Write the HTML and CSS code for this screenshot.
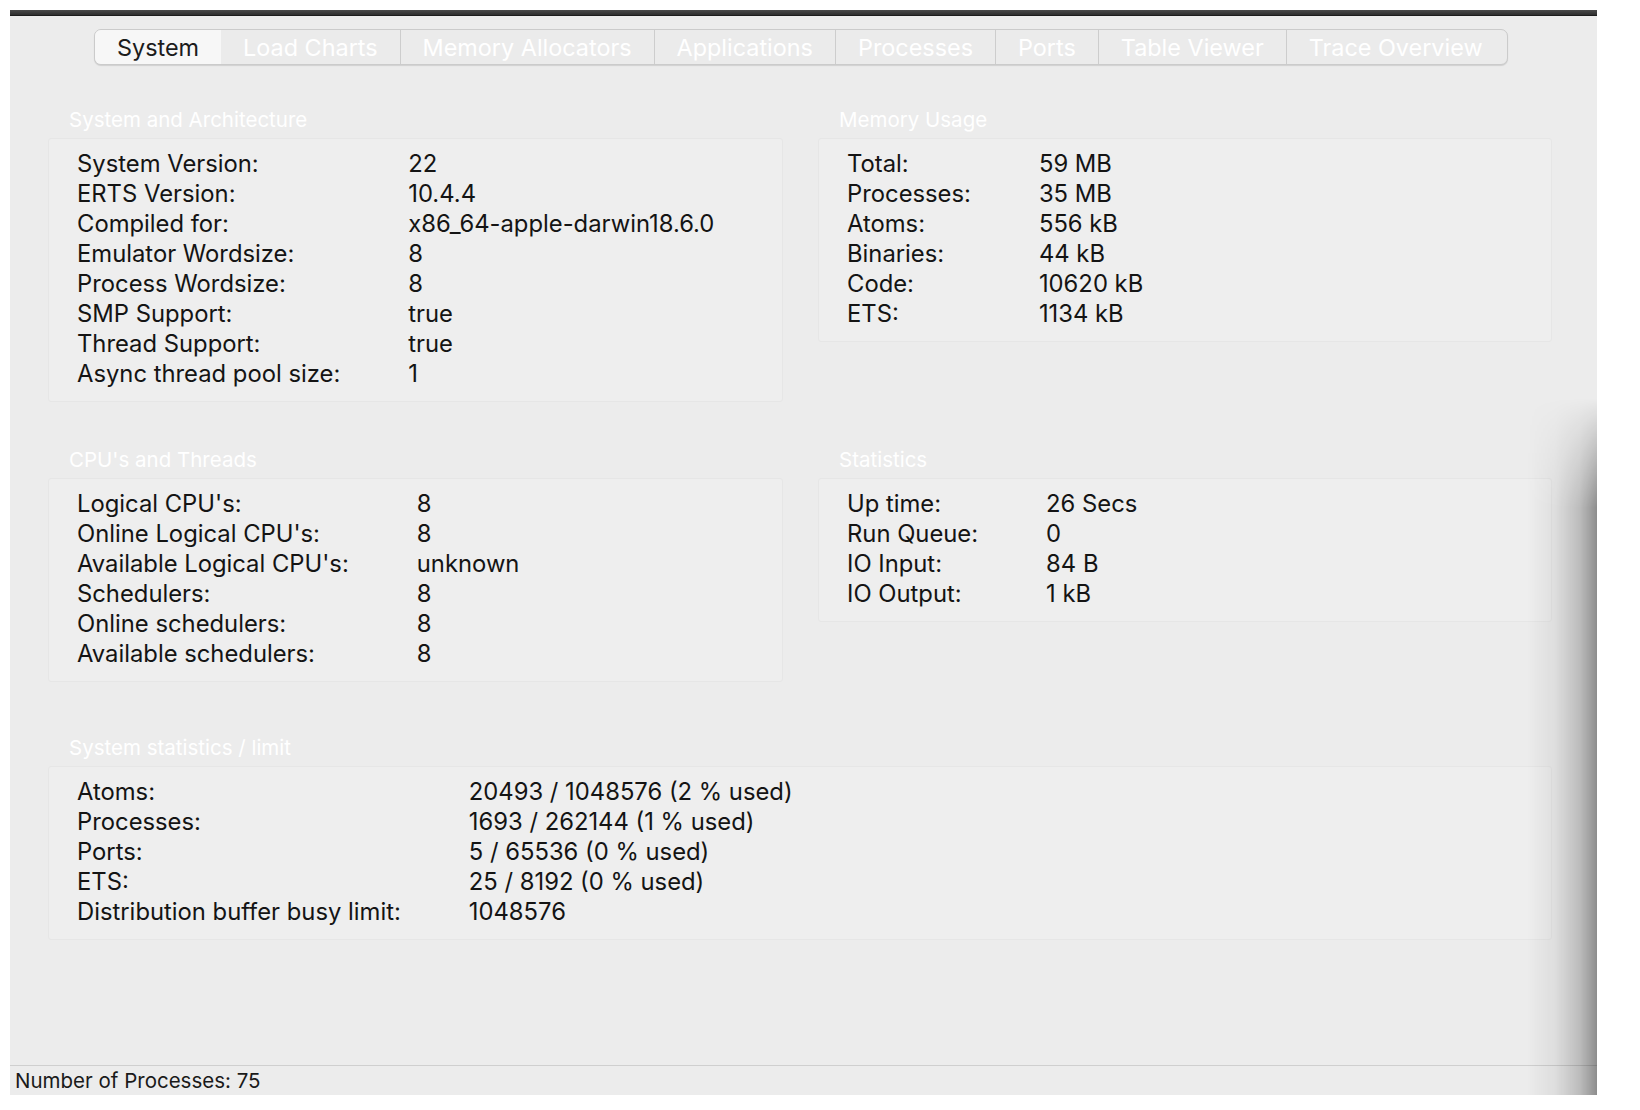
FILE: index.html
```html
<!DOCTYPE html>
<html>
<head>
<meta charset="utf-8">
<link rel="stylesheet" href="styles.css">
</head>
<body>
<div class="window">
  <div class="titlebar"></div>
  <div class="tabbar">
    <div class="tab selected">System</div>
    <div class="tab">Load Charts</div>
    <div class="tab divided">Memory Allocators</div>
    <div class="tab divided">Applications</div>
    <div class="tab divided">Processes</div>
    <div class="tab divided">Ports</div>
    <div class="tab divided">Table Viewer</div>
    <div class="tab divided">Trace Overview</div>
  </div>

  <div class="content">
    <div class="row row-1">
      <section class="section">
        <h2 class="heading">System and Architecture</h2>
        <div class="panel">
          <div class="kv">
            <span>System Version:</span><span>22</span>
            <span>ERTS Version:</span><span>10.4.4</span>
            <span>Compiled for:</span><span>x86_64-apple-darwin18.6.0</span>
            <span>Emulator Wordsize:</span><span>8</span>
            <span>Process Wordsize:</span><span>8</span>
            <span>SMP Support:</span><span>true</span>
            <span>Thread Support:</span><span>true</span>
            <span>Async thread pool size:</span><span>1</span>
          </div>
        </div>
      </section>
      <section class="section">
        <h2 class="heading">Memory Usage</h2>
        <div class="panel">
          <div class="kv">
            <span>Total:</span><span>59 MB</span>
            <span>Processes:</span><span>35 MB</span>
            <span>Atoms:</span><span>556 kB</span>
            <span>Binaries:</span><span>44 kB</span>
            <span>Code:</span><span>10620 kB</span>
            <span>ETS:</span><span>1134 kB</span>
          </div>
        </div>
      </section>
    </div>

    <div class="row row-2">
      <section class="section">
        <h2 class="heading">CPU's and Threads</h2>
        <div class="panel">
          <div class="kv">
            <span>Logical CPU's:</span><span>8</span>
            <span>Online Logical CPU's:</span><span>8</span>
            <span>Available Logical CPU's:</span><span>unknown</span>
            <span>Schedulers:</span><span>8</span>
            <span>Online schedulers:</span><span>8</span>
            <span>Available schedulers:</span><span>8</span>
          </div>
        </div>
      </section>
      <section class="section">
        <h2 class="heading">Statistics</h2>
        <div class="panel">
          <div class="kv">
            <span>Up time:</span><span>26 Secs</span>
            <span>Run Queue:</span><span>0</span>
            <span>IO Input:</span><span>84 B</span>
            <span>IO Output:</span><span>1 kB</span>
          </div>
        </div>
      </section>
    </div>

    <div class="row row-3">
      <section class="section wide">
        <h2 class="heading">System statistics / limit</h2>
        <div class="panel">
          <div class="kv">
            <span>Atoms:</span><span>20493 / 1048576 (2 % used)</span>
            <span>Processes:</span><span>1693 / 262144 (1 % used)</span>
            <span>Ports:</span><span>5 / 65536 (0 % used)</span>
            <span>ETS:</span><span>25 / 8192 (0 % used)</span>
            <span>Distribution buffer busy limit:</span><span>1048576</span>
          </div>
        </div>
      </section>
    </div>
  </div>

  <div class="statusbar">Number of Processes: 75</div>
  <div class="edge-shadow"></div>
</div>
</body>
</html>
```

FILE: styles.css
```css
html, body {
  margin: 0;
  padding: 0;
  background: #ffffff;
}

body {
  font-family: Inter, "Noto Sans", "Liberation Sans", sans-serif;
  color: #141414;
}

.window {
  position: relative;
  margin: 10px 0 0 10px;
  width: 1587px;
  height: 1085px;
  background: #ececec;
  display: flex;
  flex-direction: column;
  overflow: hidden;
}

.titlebar {
  height: 5px;
  background: linear-gradient(#4a4a4a, #2e2e2e);
  border-bottom: 1px solid #1c1c1c;
  flex: none;
}

.tabbar {
  flex: none;
  display: flex;
  margin: 13px 0 0 84px;
  width: 1412px;
  height: 34px;
  box-sizing: content-box;
  border: 1px solid #cbcbcb;
  border-radius: 7px;
  box-shadow: 0 1px 1px rgba(0, 0, 0, 0.12);
  background: #ebebeb;
  overflow: hidden;
}

.tab {
  display: flex;
  align-items: center;
  padding: 0 22px;
  font-size: 23.4px;
  color: #ffffff;
  white-space: nowrap;
}

.tab.divided {
  border-left: 1px solid #cdcdcd;
}

.tab.selected {
  background: #f7f7f7;
  color: #1c1c1c;
}

.tab:last-child {
  flex: 1;
}

.content {
  flex: 1;
  padding: 0 45px 0 38px;
}

.row {
  display: grid;
  grid-template-columns: 735px 734px;
  column-gap: 35px;
  align-items: start;
}

.row-1 { margin-top: 42px; }
.row-2 { margin-top: 45px; }
.row-3 { margin-top: 53px; grid-template-columns: 1504px; }

.heading {
  margin: 0 0 6px 21px;
  font-size: 20.5px;
  line-height: 25px;
  font-weight: 400;
  color: #ffffff;
}

.panel {
  background: #eeeeee;
  border: 1px solid #e6e6e6;
  border-radius: 3px;
  padding: 10px 28px 12px;
}

.kv {
  display: grid;
  grid-template-columns: max-content max-content;
  column-gap: 68px;
  font-size: 23.8px;
  line-height: 30px;
  color: #141414;
}

.statusbar {
  flex: none;
  height: 29px;
  border-top: 1px solid #cfcfcf;
  padding-left: 5px;
  font-size: 20.5px;
  line-height: 29px;
  color: #1a1a1a;
  background: #ececec;
}

.edge-shadow {
  position: absolute;
  right: 0;
  top: 388px;
  bottom: 0;
  width: 70px;
  background: linear-gradient(to right, rgba(0, 0, 0, 0) 0%, rgba(0, 0, 0, 0.06) 40%, rgba(0, 0, 0, 0.2) 75%, rgba(0, 0, 0, 0.4) 100%);
  -webkit-mask-image: linear-gradient(to bottom, transparent 0, #000 110px);
  mask-image: linear-gradient(to bottom, transparent 0, #000 110px);
  pointer-events: none;
}
```
